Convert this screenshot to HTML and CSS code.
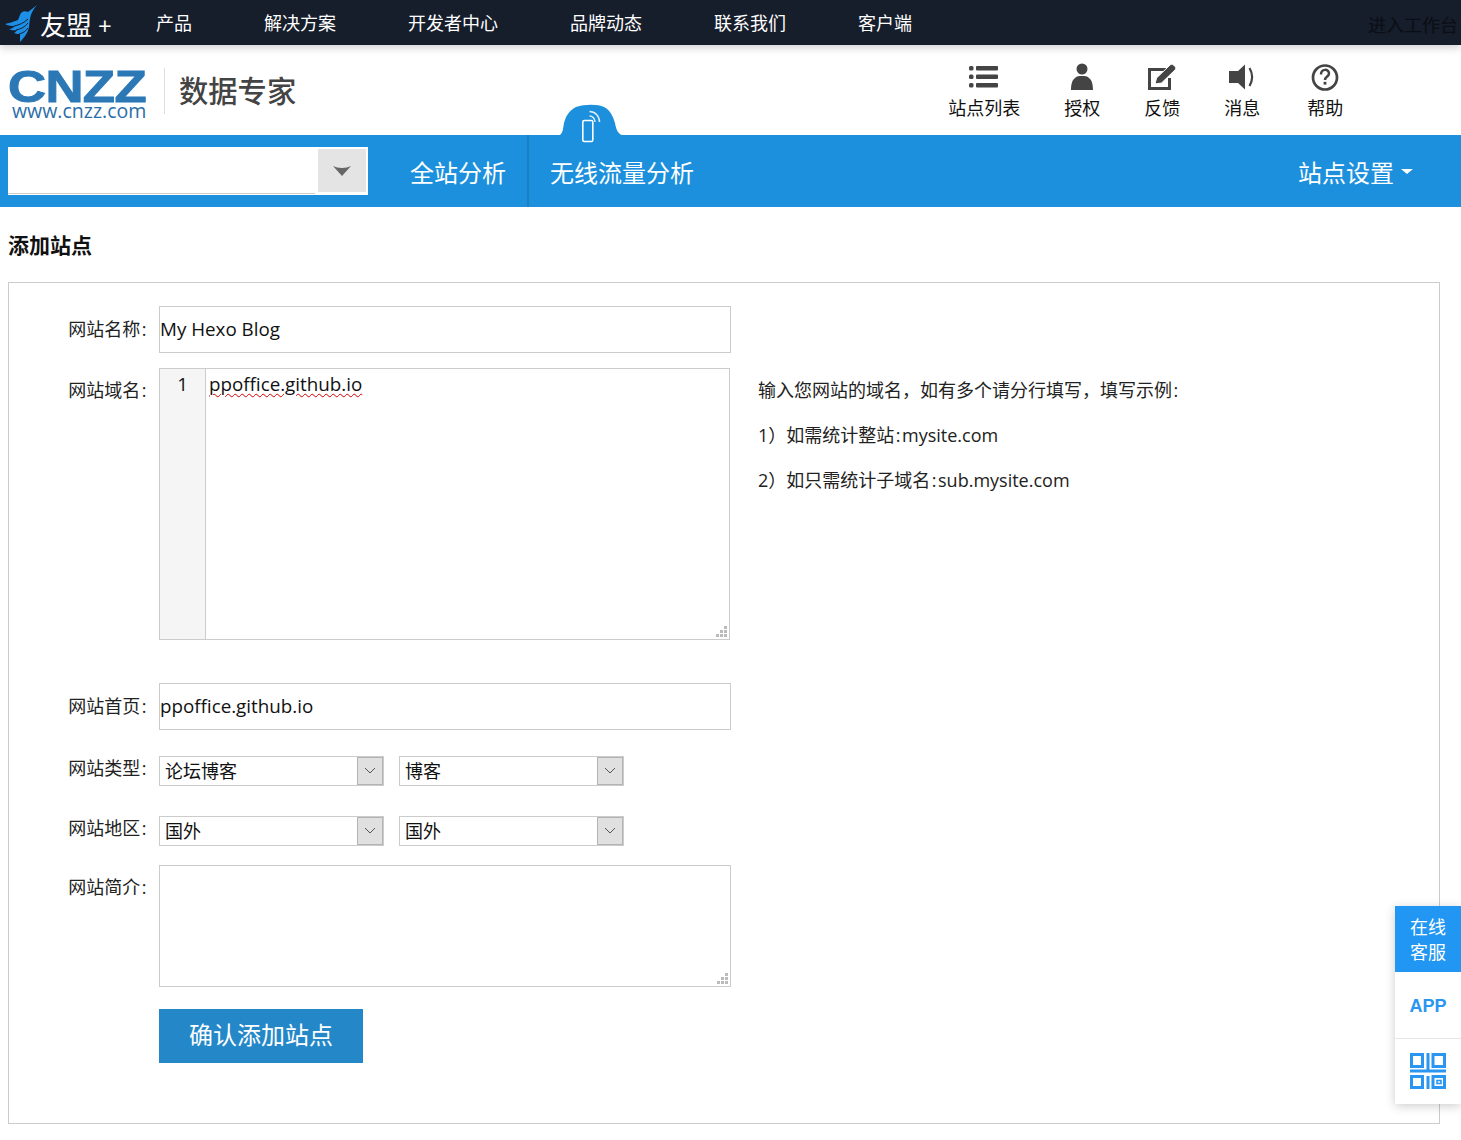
FILE: index.html
```html
<!DOCTYPE html>
<html lang="zh-CN">
<head>
<meta charset="utf-8">
<title>添加站点</title>
<link rel="stylesheet" href="styles.css">
</head>
<body>
<div class="topbar">
  <a class="um-logo">
    <svg class="um-bird" width="36" height="42" viewBox="0 0 36 42"><path fill="#1c8fe6" d="M35 4 26 11C22 9 19 11 18 14L16 19C11 21 7 22 3 23 7 25 10 25 13 25 11 27 9 28 7 28 10 30 13 29 15 29 14 31 13 31 12 32 14 33 16 33 18 33 18 36 18 39 18 41 22 37 26 32 27 26 28 20 27 13 35 4z"/><path fill="none" stroke="#161d2b" stroke-width="1" d="M12 25c5-1 10-3 14-7M14 29c5-1 9-3 12-7M17 33c4-1 7-3 9-6"/></svg>
    <span class="um-name">友盟</span><span class="um-plus">+</span>
  </a>
  <nav class="topnav">
    <a>产品</a><a>解决方案</a><a>开发者中心</a><a>品牌动态</a><a>联系我们</a><a>客户端</a>
  </nav>
  <a class="workbench">进入工作台</a>
</div>

<header class="head">
  <div class="brand">
    <div class="cnzz">
      <div class="cnzz-big">CNZZ</div>
      <div class="cnzz-url">www.cnzz.com</div>
    </div>
    <div class="brand-title">数据专家</div>
  </div>
  <ul class="tools">
    <li class="tool t1">
      <svg width="32" height="28" viewBox="0 0 32 28"><g fill="#444"><rect x="1" y="3" width="4.500" height="4.500" rx="1.500"/><rect x="1" y="11.500" width="4.500" height="4.500" rx="1.500"/><rect x="1" y="20" width="4.500" height="4.500" rx="1.500"/><rect x="8" y="3" width="22" height="4.500" rx="1"/><rect x="8" y="11.500" width="22" height="4.500" rx="1"/><rect x="8" y="20" width="22" height="4.500" rx="1"/></g></svg>
      <span>站点列表</span>
    </li>
    <li class="tool t2">
      <svg width="24" height="28" viewBox="0 0 24 28"><g fill="#444"><circle cx="12" cy="6" r="5.500"/><path d="M1 27c0-5 1-10 4-12 2-2 4-2 7-2s5 0 7 2c3 2 4 7 4 12z"/></g></svg>
      <span>授权</span>
    </li>
    <li class="tool t3">
      <svg width="30" height="28" viewBox="0 0 30 28"><path fill="none" stroke="#444" stroke-width="3" d="M19 6.500H2.500v19h20V15"/><path fill="#444" stroke="#fff" stroke-width="1" d="M8 21l1.500-6L23 2c1-1 2.500-1 3.500 0l1.500 1.500c1 1 1 2.500 0 3.500L14.500 20z"/></svg>
      <span>反馈</span>
    </li>
    <li class="tool t4">
      <svg width="28" height="28" viewBox="0 0 28 28"><path fill="#444" d="M1 8h9l7-6.500v25L10 20H1z"/><path fill="none" stroke="#444" stroke-width="2.200" d="M21.500 5c3.500 6 3.500 12 0 18"/></svg>
      <span>消息</span>
    </li>
    <li class="tool t5">
      <svg width="28" height="28" viewBox="0 0 28 28"><circle cx="14" cy="14.500" r="12" fill="none" stroke="#444" stroke-width="2.700"/><path fill="none" stroke="#444" stroke-width="2.500" d="M10 11.500c0-6 8-6 8-1 0 3-4 3-4 6.500"/><rect x="12.600" y="18.800" width="2.800" height="2.800" fill="#444"/></svg>
      <span>帮助</span>
    </li>
  </ul>
</header>

<div class="bluebar">
  <svg class="bump" width="62" height="52" viewBox="0 0 62 52"><path fill="#1c90dc" d="M0 31C3 29 3 24 4 19 6 11 10 6 16 3 25 0 38 0 44 3 50 6 53 12 55 19 56 25 58 30 62 31z"/><g fill="none" stroke="#fff"><rect x="22.800" y="16.500" width="10" height="21" rx="1.500" stroke-width="1.600"/><path stroke-width="1.500" opacity=".85" d="M29.500 12c3 0 5.500 2.500 5.500 6M29.500 7.500c5.500 0 10 4.500 10 10.500"/></g></svg>
  <div class="site-select">
    <div class="site-input"></div>
    <div class="site-arrow"><svg width="18" height="10" viewBox="0 0 18 10"><path fill="#666" d="M0 0c3 1 5 2 9 2s6-1 9-2L9 10z"/></svg></div>
  </div>
  <a class="bluetab tab-a">全站分析</a>
  <a class="bluetab tab-b">无线流量分析</a>
  <a class="settings">站点设置<i></i></a>
</div>

<main class="content">
  <h1 class="title">添加站点</h1>
  <section class="panel">
    <div class="row row-name">
      <label class="lbl">网站名称<span class="colon">:</span></label>
      <div class="field">My Hexo Blog</div>
    </div>
    <div class="row row-domain">
      <label class="lbl lbl-domain">网站域名<span class="colon">:</span></label>
      <div class="code">
        <div class="gutter">1</div>
        <div class="code-text"><span class="squiggle">ppoffice.github.io</span></div>
        <svg class="grip" width="11" height="11" viewBox="0 0 11 11"><path fill="#bbb" d="M8 0h3v3H8zM4 4h3v3H4zM8 4h3v3H8zM0 8h3v3H0zM4 8h3v3H4zM8 8h3v3H8z"/></svg>
      </div>
      <div class="hint">
        <p>输入您网站的域名，如有多个请分行填写，填写示例<span class="colon">:</span></p>
        <p>1）如需统计整站<span class="colon">:</span>mysite.com</p>
        <p>2）如只需统计子域名<span class="colon">:</span>sub.mysite.com</p>
      </div>
    </div>
    <div class="row row-home">
      <label class="lbl">网站首页<span class="colon">:</span></label>
      <div class="field">ppoffice.github.io</div>
    </div>
    <div class="row row-type">
      <label class="lbl lbl-sel">网站类型<span class="colon">:</span></label>
      <div class="sel"><span>论坛博客</span><b><svg width="12" height="8" viewBox="0 0 12 8"><path fill="none" stroke="#555" d="M1 1l5 5 5-5"/></svg></b></div>
      <div class="sel"><span>博客</span><b><svg width="12" height="8" viewBox="0 0 12 8"><path fill="none" stroke="#555" d="M1 1l5 5 5-5"/></svg></b></div>
    </div>
    <div class="row row-area">
      <label class="lbl lbl-sel">网站地区<span class="colon">:</span></label>
      <div class="sel"><span>国外</span><b><svg width="12" height="8" viewBox="0 0 12 8"><path fill="none" stroke="#555" d="M1 1l5 5 5-5"/></svg></b></div>
      <div class="sel"><span>国外</span><b><svg width="12" height="8" viewBox="0 0 12 8"><path fill="none" stroke="#555" d="M1 1l5 5 5-5"/></svg></b></div>
    </div>
    <div class="row row-intro">
      <label class="lbl lbl-intro">网站简介<span class="colon">:</span></label>
      <div class="area">
        <svg class="grip" width="11" height="11" viewBox="0 0 11 11"><path fill="#bbb" d="M8 0h3v3H8zM4 4h3v3H4zM8 4h3v3H8zM0 8h3v3H0zM4 8h3v3H4zM8 8h3v3H8z"/></svg>
      </div>
    </div>
    <div class="row row-submit">
      <button class="submit" type="button">确认添加站点</button>
    </div>
  </section>
</main>

<aside class="float">
  <div class="float-chat">在线<br>客服</div>
  <div class="float-app">APP</div>
  <div class="float-qr">
    <svg width="36" height="36" viewBox="0 0 36 36"><g fill="none" stroke="#2b96f1" stroke-width="3"><rect x="1.500" y="1.500" width="11" height="12"/><rect x="23" y="1.500" width="11.500" height="12"/><rect x="1.500" y="23.500" width="11" height="11"/><rect x="23" y="23.500" width="11.500" height="11"/><path d="M18 0v19M0 18h36M18 23v13"/><rect x="27" y="27.500" width="4" height="3" stroke-width="1.600"/></g></svg>
  </div>
</aside>
</body>
</html>
```
FILE: styles.css
```css
* { box-sizing: border-box; }
html, body { margin: 0; padding: 0; }
body {
  position: relative;
  height: 1140px;
  overflow: hidden;
  background: #fff;
  color: #111;
  font-family: "Open Sans", "Noto Sans CJK SC", sans-serif;
  font-size: 18px;
}
a { color: inherit; text-decoration: none; }
ul { list-style: none; margin: 0; padding: 0; }

.topbar {
  position: relative;
  z-index: 2;
  display: flex;
  align-items: center;
  height: 45px;
  background: #161d2b;
  box-shadow: 0 3px 8px rgba(0,0,0,.18);
  color: #fff;
}
.um-logo { display: flex; align-items: center; width: 156px; height: 45px; padding-left: 2px; }
.um-bird { flex: none; margin-right: 2px; margin-top: -1px; }
.um-name { font-size: 26px; line-height: 45px; margin-top: 5px; }
.um-plus { font-size: 24px; margin-left: 6px; margin-top: 5px; }
.topnav { display: flex; gap: 72px; flex: 1; line-height: 48px; font-size: 18px; }
.workbench { color: #0b0e14; font-size: 18px; margin-right: 3px; margin-top: 2px; }

.head { display: flex; align-items: flex-start; height: 90px; }
.brand { display: flex; align-items: center; margin: 22px 0 0 8px; }
.cnzz { width: 140px; height: 48px; }
.cnzz-big {
  font-family: "Liberation Sans", sans-serif;
  font-weight: 700;
  font-size: 45px;
  line-height: 36px;
  letter-spacing: -0.5px;
  color: #2b78b5;
  -webkit-text-stroke: 1px #2a78b8;
  transform: translateY(2px) scale(1.17,1);
  transform-origin: 0 0;
}
.cnzz-url {
  font-family: "Open Sans", sans-serif;
  font-size: 19.500px;
  font-weight: 500;
  line-height: 15px;
  margin-top: 0;
  letter-spacing: 0;
  color: #2a6ea8;
  padding-left: 4px;
}
.brand-title {
  margin-left: 16px;
  padding-left: 14px;
  border-left: 1px solid #ddd;
  height: 46px;
  line-height: 46px;
  font-size: 29.300px;
  font-weight: 500;
  color: #444;
}
.tools { position: relative; flex: 1; height: 90px; display: flex; padding-left: 652px; }
.tool { display: flex; flex-direction: column; align-items: center; font-size: 18px; line-height: 22px; }
.tool svg { display: block; height: 28px; margin-top: 18px; margin-bottom: 6px; flex: none; }
.t1 { width: 72px; }
.t2 { width: 36px; margin-left: 44px; }
.t3 { width: 36px; margin-left: 44px; }
.t4 { width: 36px; margin-left: 44px; }
.t5 { width: 36px; margin-left: 47px; }

.bluebar {
  position: relative;
  display: flex;
  align-items: center;
  height: 72px;
  background: #1c90dc;
  color: #fff;
}
.bump { position: absolute; left: 560px; top: -31px; }
.site-select {
  display: flex;
  width: 360px;
  height: 48px;
  margin-left: 8px;
  background: #fff;
  padding: 1px 2px 2px 0;
}
.site-input { width: 307px; height: 46px; border-bottom: 1px solid #ccc; }
.site-arrow {
  display: flex;
  align-items: center;
  justify-content: center;
  width: 48px;
  height: 43px;
  margin-top: 1px;
  margin-left: 3px;
  background: #e4e4e4;
}
.bluetab { height: 72px; line-height: 76px; font-size: 24px; }
.tab-a { width: 161px; padding-left: 42px; border-right: 2px solid #1a80c4; }
.tab-b { padding-left: 21px; flex: 1; }
.settings { font-size: 24px; margin-right: 48px; display: flex; align-items: center; line-height: 76px; height: 72px; padding-top: 4px; }
.settings i {
  width: 0;
  height: 0;
  margin-left: 7px;
  margin-top: -4px;
  border: 6px solid transparent;
  border-bottom: 0;
  border-top: 5px solid #fff;
}

.content { padding: 0 21px 0 8px; }
.title { margin: 0; height: 75px; line-height: 76px; font-size: 21px; font-weight: 700; color: #111; }
.panel { height: 842px; border: 1px solid #ccc; padding-top: 23px; }
.row { display: flex; }
.lbl { width: 139px; flex: none; text-align: right; font-size: 18px; color: #222; white-space: nowrap; }
.colon { margin: 0 1.500px; }
.row-name, .row-home { height: 47px; }
.row-name .lbl, .row-home .lbl { line-height: 47px; }
.row-domain { height: 272px; margin-top: 15px; }
.row-home { margin-top: 43px; }
.row-type { margin-top: 26px; height: 30px; }
.row-area { margin-top: 30px; height: 30px; }
.row-intro { margin-top: 19px; height: 122px; }
.row-submit { margin-top: 22px; padding-left: 150px; }
.field {
  width: 572px;
  margin-left: 11px;
  border: 1px solid #ccc;
  font-size: 18.800px;
  line-height: 44px;
  color: #111;
}
.lbl-domain { line-height: 44px; }
.code {
  position: relative;
  display: flex;
  width: 571px;
  height: 272px;
  margin-left: 11px;
  border: 1px solid #ccc;
}
.gutter {
  width: 46px;
  flex: none;
  background: #f5f5f5;
  border-right: 1px solid #ccc;
  text-align: center;
  font-size: 18.800px;
  line-height: 30px;
}
.code-text { padding-left: 3px; font-size: 18.800px; line-height: 30px; }
.squiggle { text-decoration: underline wavy #d40000 1px; text-underline-offset: 2px; }
.grip { position: absolute; right: 2px; bottom: 2px; }
.hint { margin-left: 28px; font-size: 18px; color: #222; }
.hint p { margin: 0 0 23px; line-height: 22px; }
.hint p:first-child { margin-top: 11px; }
.sel {
  display: flex;
  width: 225px;
  height: 30px;
  margin-left: 11px;
  border: 1px solid #ccc;
  font-size: 18px;
  line-height: 28px;
  color: #111;
}
.sel + .sel { margin-left: 15px; }
.sel span { flex: 1; padding-left: 5px; }
.sel b {
  display: flex;
  align-items: center;
  justify-content: center;
  width: 26px;
  height: 28px;
  background: #e0e0e0;
  border: 1px solid #b3b3b3;
}
.lbl-sel { line-height: 24px; }
.lbl-intro { line-height: 44px; }
.area {
  position: relative;
  width: 572px;
  height: 122px;
  margin-left: 11px;
  border: 1px solid #ccc;
}
.submit {
  width: 204px;
  height: 54px;
  border: 0;
  padding: 0 0 5px;
  background: #2488c8;
  color: #fff;
  font-family: inherit;
  font-size: 24px;
}

.float {
  position: absolute;
  right: 0;
  top: 906px;
  width: 66px;
  background: #fff;
  box-shadow: 0 2px 10px rgba(0,0,0,.2);
  text-align: center;
}
.float-chat { height: 66px; padding-top: 9px; background: #2196f3; color: #fff; font-size: 18px; line-height: 25px; }
.float-app {
  height: 67px;
  padding-top: 1px;
  line-height: 66px;
  border-bottom: 1px solid #e6e6e6;
  color: #2b96f1;
  font-size: 18px;
  font-weight: 700;
  font-family: "Liberation Sans", sans-serif;
}
.float-qr { height: 65px; padding-top: 14px; }
.float-qr svg { display: block; margin: 0 auto; }
```
